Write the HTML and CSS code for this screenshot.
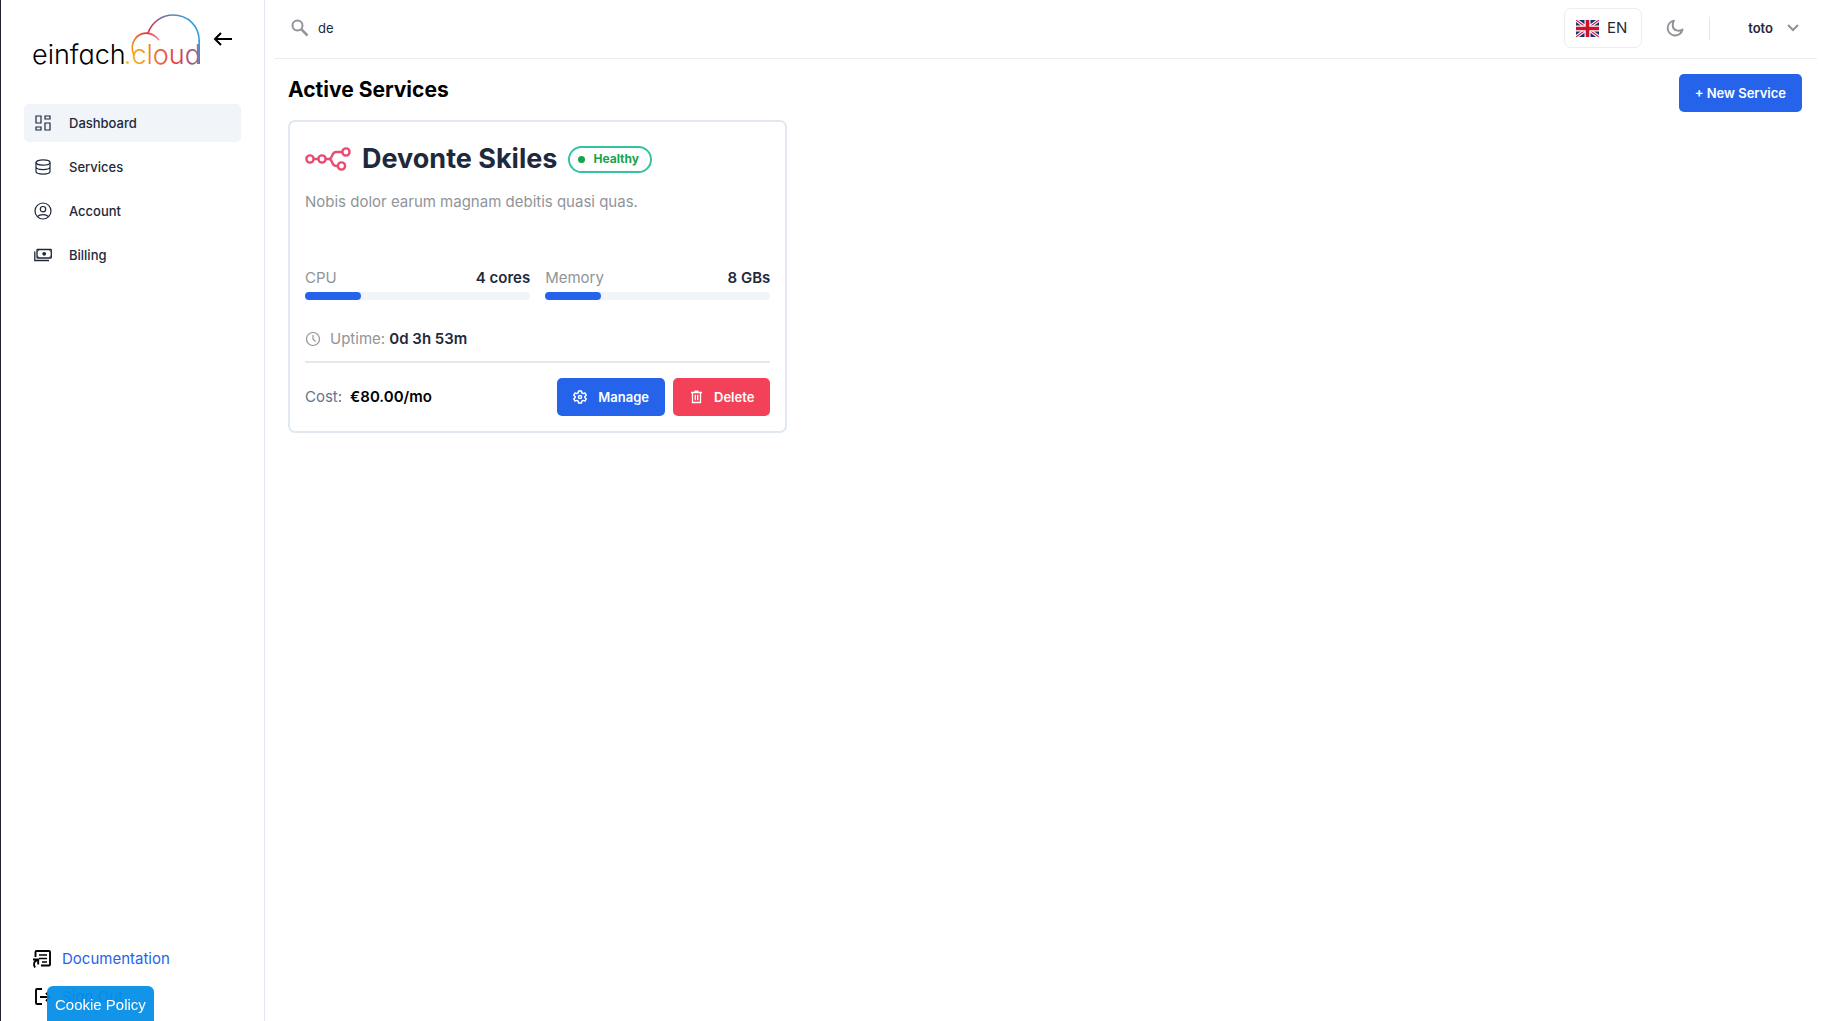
FILE: index.html
```html
<!DOCTYPE html>
<html lang="en">
<head>
<meta charset="utf-8">
<title>einfach.cloud – Dashboard</title>
<link rel="stylesheet" href="styles.css">
</head>
<body>
<div class="app">
  <aside class="sidebar">
    <div class="brand">
      <a class="logo" href="#" aria-label="einfach.cloud">
        <svg width="170" height="56" viewBox="32 12 170 56">
          <defs>
            <linearGradient id="word" gradientUnits="userSpaceOnUse" x1="130" y1="0" x2="200" y2="0">
              <stop offset="0" stop-color="#f5b81f"/><stop offset=".25" stop-color="#ef8a2b"/><stop offset=".65" stop-color="#e2383f"/><stop offset="1" stop-color="#7d6a9e"/>
            </linearGradient>
            <linearGradient id="small" gradientUnits="userSpaceOnUse" x1="132" y1="52" x2="160" y2="34">
              <stop offset="0" stop-color="#f59a1b"/><stop offset=".7" stop-color="#e3343c"/><stop offset="1" stop-color="#eeb0b8"/>
            </linearGradient>
            <linearGradient id="big" gradientUnits="userSpaceOnUse" x1="148" y1="34" x2="200" y2="34">
              <stop offset="0" stop-color="#dc2f45"/><stop offset=".25" stop-color="#8a6798"/><stop offset=".55" stop-color="#4b8fc9"/><stop offset="1" stop-color="#2f9fe0"/>
            </linearGradient>
            <linearGradient id="stem" gradientUnits="userSpaceOnUse" x1="0" y1="40" x2="0" y2="64">
              <stop offset="0" stop-color="#2f9fe0"/><stop offset="1" stop-color="#8a6798"/>
            </linearGradient>
          </defs>
          <text class="wordmark" x="32" y="64">einfach</text>
          <text class="wordmark" x="201" y="64" text-anchor="end" fill="url(#word)">.cloud</text>
          <g fill="none" stroke-width="1.6">
            <path stroke="url(#small)" d="M134 55C131 50 132 43 135 39C140 32 151 30 159 40"/>
            <path stroke="url(#big)" d="M148 33C152 22 162 15 173 15C188 15 199.200 26 199.200 41"/>
            <path stroke="url(#stem)" d="M199.200 40L199.210 64"/>
          </g>
        </svg>
      </a>
      <button class="icon-button" type="button" aria-label="Collapse sidebar">
        <svg width="20" height="14" viewBox="0 0 20 14" fill="none" stroke="#000" stroke-width="2"><path d="M19 7H2M8 1L2 7l6 6"/></svg>
      </button>
    </div>
    <nav class="nav">
      <a class="nav-item active" href="#">
        <svg width="18" height="18" viewBox="0 0 18 18" fill="none" stroke="currentColor" stroke-width="1.200"><path d="M2 2h5v7H2zM11 2h5v3h-5zM11 9h5v7h-5zM2 13h5v3H2z"/></svg>
        Dashboard</a>
      <a class="nav-item" href="#">
        <svg width="18" height="18" viewBox="0 0 18 18" fill="none" stroke="currentColor" stroke-width="1.200"><ellipse cx="9" cy="4.500" rx="7" ry="2.600"/><path d="M2 4.500v9c0 3.400 14 3.400 14 0v-9M2 9c0 3.400 14 3.400 14 0"/></svg>
        Services</a>
      <a class="nav-item" href="#">
        <svg width="18" height="18" viewBox="0 0 18 18" fill="none" stroke="currentColor" stroke-width="1.200"><circle cx="9" cy="9" r="8"/><circle cx="9" cy="7.200" r="2.700"/><path d="M3.500 14.500c2.500-2.600 8.500-2.600 11 0"/></svg>
        Account</a>
      <a class="nav-item" href="#">
        <svg width="18" height="18" viewBox="0 0 18 18" fill="none" stroke="currentColor" stroke-width="1.300"><rect x="3" y="3.500" width="14.300" height="8.500" rx=".5"/><path d="M.8 5.500v9H15"/><path d="M3 5.500c1 0 1.700-.7 1.700-1.700M17.300 5.500c-1 0-1.700-.7-1.700-1.700M3 10c1 0 1.700.7 1.700 1.700M17.300 10c-1 0-1.700.7-1.700 1.700" stroke-width=".8"/><circle cx="10.200" cy="7.800" r="1.900" fill="currentColor" stroke="none"/></svg>
        Billing</a>
    </nav>
    <div class="foot">
      <a class="foot-item" href="#">
        <svg width="20" height="20" viewBox="0 0 20 20" fill="none" stroke="#000" stroke-width="1.900"><path d="M3.500 8V3q0-1 1-1H17q1 0 1 1v12.500q0 1-1 1H9"/><path d="M7 6h8M7 9.500h8M10 13h5" stroke-width="1.500"/><path d="M1 10.500h5.200v5M6 11c-4 .5-5 4-3 7.500"/></svg>
        Documentation</a>
      <a class="foot-item" href="#">
        <svg width="20" height="20" viewBox="0 0 20 20" fill="none" stroke="#000" stroke-width="1.900"><path d="M10 2H5q-1 0-1 1v13q0 1 1 1h5M8 10h10M14 6l4 4-4 4"/></svg>
        Sign Out</a>
    </div>
  </aside>
  <div class="page">
    <header class="topbar">
      <label class="search">
        <svg width="18" height="18" viewBox="0 0 18 18" fill="none" stroke="#919498" stroke-width="2"><circle cx="6.500" cy="6.500" r="5"/><path d="M10.200 10.200L16.500 16.500" stroke-width="2.500"/></svg>
        <input type="text" value="de" aria-label="Search">
      </label>
      <button class="lang" type="button">
        <svg width="23" height="17" viewBox="0 0 23 17"><path fill="#1c2f72" d="M0 0h23v17H0z"/><path stroke="#fff" stroke-width="3.400" d="M0 0l23 17M23 0L0 17"/><path stroke="#d0213f" stroke-width="1.200" d="M0 0l23 17M23 0L0 17"/><path stroke="#fff" stroke-width="6" d="M11.500 0v17M0 8.500h23"/><path stroke="#cf102d" stroke-width="3.600" d="M11.500 0v17M0 8.500h23"/></svg>
        EN</button>
      <button class="icon-button" type="button" aria-label="Dark mode">
        <svg width="18" height="18" viewBox="0 0 18 18" fill="none" stroke="#8f9296" stroke-width="1.900" stroke-linejoin="round"><path d="M8 1.600A7.500 7.500 0 1 0 16.500 10.500C13 13 7.500 11.500 6.800 7.500C6.400 5 6.800 3 8 1.600z"/></svg>
      </button>
      <span class="divider"></span>
      <button class="user" type="button">toto
        <svg width="12" height="8" viewBox="0 0 12 8" fill="none" stroke="#8f9296" stroke-width="2"><path d="M1 1l5 5 5-5"/></svg>
      </button>
    </header>
    <main class="content">
      <div class="heading">
        <h1>Active Services</h1>
        <button class="btn primary" type="button">+ New Service</button>
      </div>
      <div class="cards">
        <article class="card">
          <div class="card-title">
            <svg width="46" height="24" viewBox="0 0 46 24" fill="none" stroke="#ea4b71" stroke-width="2.400"><circle cx="5" cy="12" r="3.600"/><circle cx="17" cy="12" r="3.600"/><circle cx="41" cy="5" r="3.600"/><circle cx="36.500" cy="19" r="3.600"/><path d="M8.600 12h4.800M20.600 12H24c4 0 2-7 7-7h6.400M24 12c4 0 2 7 7 7h2"/></svg>
            <h2>Devonte Skiles</h2>
            <span class="badge">Healthy</span>
          </div>
          <p class="desc">Nobis dolor earum magnam debitis quasi quas.</p>
          <div class="meters">
            <div class="meter">
              <div class="meter-text"><span>CPU</span><strong>4 cores</strong></div>
              <div class="track"><div class="fill" style="width:25%"></div></div>
            </div>
            <div class="meter">
              <div class="meter-text"><span>Memory</span><strong>8 GBs</strong></div>
              <div class="track"><div class="fill" style="width:25%"></div></div>
            </div>
          </div>
          <div class="uptime">
            <svg width="16" height="16" viewBox="0 0 16 16" fill="none" stroke="currentColor" stroke-width="1.200"><circle cx="8" cy="8" r="6.500"/><path d="M8 4v4l2.500 2.500"/></svg>
            <span>Uptime: <strong>0d 3h 53m</strong></span>
          </div>
          <div class="card-foot">
            <span class="cost">Cost: <strong>€80.00/mo</strong></span>
            <button class="btn primary" type="button">
              <svg width="14" height="14" viewBox="0 0 14 14" fill="none" stroke="#fff" stroke-width="1.500" stroke-linejoin="round"><path d="M5.600 1h2.800l.4 1.900 1.200.7 1.900-.7 1.300 2.300L11.800 6.500v1l1.400 1.300-1.300 2.300-1.900-.7-1.200.7-.4 1.900H5.600l-.4-1.900-1.200-.7-1.900.7L.8 8.800l1.400-1.300v-1L.8 5.200l1.300-2.300 1.900.7 1.200-.7z"/><circle cx="7" cy="7" r="1.600"/></svg>
              Manage</button>
            <button class="btn danger" type="button">
              <svg width="14" height="14" viewBox="0 0 14 14" fill="none" stroke="#fff" stroke-width="1.300"><path d="M2 2.500h11M5.500 1.200h4M3.500 2.500v10h8v-10M6.300 4.800v5.500M8.700 4.800v5.500"/></svg>
              Delete</button>
          </div>
        </article>
      </div>
    </main>
  </div>
</div>
<button class="cookie" type="button">Cookie Policy</button>
</body>
</html>
```
FILE: styles.css
```css
* { box-sizing: border-box; }
body { margin: 0; background: #fff; color: #1e293b; font-family: Inter, "Liberation Sans", sans-serif; font-size: 15px; line-height: 20px; }
button, input { font: inherit; color: inherit; }
button { border: 0; background: none; padding: 0; cursor: pointer; }
a { text-decoration: none; color: inherit; }
svg { flex: none; display: block; overflow: visible; }
.lang svg { overflow: hidden; }
h1, h2, p { margin: 0; }
strong { font-weight: 600; }

.app { display: flex; min-height: 100vh; }
.sidebar { flex: none; width: 265px; border-left: 1px solid #23222f; border-right: 1px solid #e2e8f0; padding: 12px 23px 14px; display: flex; flex-direction: column; }
.brand { display: flex; align-items: center; padding-left: 8px; gap: 11px; height: 56px; }
.brand .icon-button { margin-bottom: 2px; }
.icon-button { display: flex; }
.wordmark { font-family: Inter, sans-serif; font-feature-settings: "cv11"; font-weight: 300; font-size: 27px; }

.nav { display: flex; flex-direction: column; gap: 6px; margin-top: 36px; }
.nav-item { display: flex; align-items: center; gap: 17px; height: 38px; padding: 0 10px; border-radius: 5px; font-size: 13px; font-weight: 500; }
.nav-item.active { background: #f1f5f9; }

.foot { margin-top: auto; padding-left: 8px; display: flex; flex-direction: column; gap: 18px; }
.foot-item { display: flex; align-items: center; gap: 10px; color: #2563eb; }
.cookie { position: fixed; left: 47px; bottom: 0; height: 35px; padding: 2px 8px 0; border-radius: 6px 6px 0 0; background: rgba(3, 141, 231, .94); color: #fff; font-family: "Liberation Sans", sans-serif; font-size: 15px; }

.page { flex: 1; min-width: 0; }
.topbar { display: flex; align-items: center; height: 59px; margin: 0 4px 0 9px; padding: 0 18px 2px 17px; border-bottom: 1px solid #eaecef; }
.search { flex: 1; display: flex; align-items: center; gap: 9px; }
.search input { flex: 1; border: 0; outline: 0; padding: 0; background: none; font-size: 13px; }
.lang { display: flex; align-items: center; gap: 8px; height: 40px; padding: 0 14px 0 11px; border: 1px solid #eaecef; border-radius: 7px; font-size: 15px; }
.topbar .icon-button { margin-left: 24px; }
.divider { width: 1px; height: 23px; margin: 0 38px 0 25px; background: #e2e8f0; }
.user { display: flex; align-items: center; gap: 14px; font-size: 13px; font-weight: 600; }

.content { padding: 15px 19px 24px 23px; }
.heading { display: flex; align-items: flex-start; justify-content: space-between; }
h1 { font-size: 21px; line-height: 32px; font-weight: 700; color: #000; }
.btn { display: flex; align-items: center; gap: 11px; height: 38px; padding: 0 16px; border-radius: 5px; color: #fff; font-size: 13px; font-weight: 600; }
.primary { background: #2563eb; }
.danger { background: #f24158; }

.cards { display: grid; grid-template-columns: repeat(3, 1fr); gap: 8px; margin-top: 8px; }
.card { border: 2px solid #e2e8f0; border-radius: 7px; padding: 19px 15px 15px; }
.card-title { display: flex; align-items: center; gap: 11px; height: 36px; }
h2 { font-size: 27px; line-height: 36px; font-weight: 700; }
.badge { display: flex; align-items: center; gap: 8px; height: 27px; padding: 0 11px 0 8px; border: 2px solid #34c3a0; border-radius: 14px; color: #16a34a; font-size: 12px; font-weight: 700; }
.badge::before { content: ""; width: 7px; height: 7px; border-radius: 50%; background: #16a34a; }
.desc { margin-top: 15px; color: #919498; }
.meters { display: grid; grid-template-columns: 1fr 1fr; gap: 15px; margin-top: 56px; }
.meter-text { display: flex; justify-content: space-between; color: #919498; }
.meter-text strong, .uptime strong { color: #1e293b; }
.track { height: 8px; margin-top: 4px; border-radius: 4px; background: #f1f5f9; }
.fill { height: 8px; border-radius: 4px; background: #2563eb; }
.uptime { display: flex; align-items: center; gap: 9px; margin-top: 29px; padding-bottom: 12px; border-bottom: 2px solid #e5e7eb; color: #919498; }
.card-foot { display: flex; align-items: center; gap: 8px; margin-top: 15px; }
.cost { margin-right: auto; display: flex; gap: 8px; color: #64748b; }
.cost strong { color: #000; }
```
